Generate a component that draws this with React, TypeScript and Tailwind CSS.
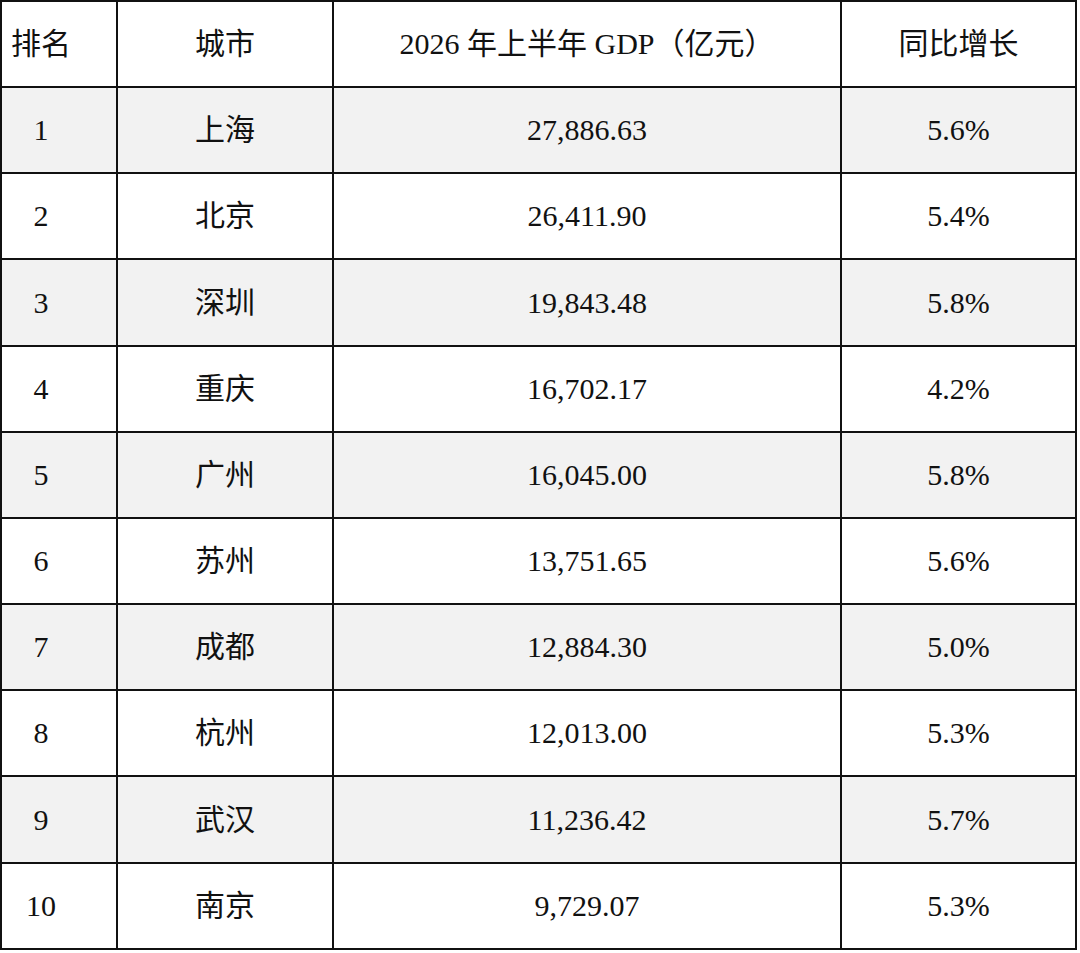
const rows = [
  { rank: "1", city: "上海", gdp: "27,886.63", growth: "5.6%" },
  { rank: "2", city: "北京", gdp: "26,411.90", growth: "5.4%" },
  { rank: "3", city: "深圳", gdp: "19,843.48", growth: "5.8%", tall: true },
  { rank: "4", city: "重庆", gdp: "16,702.17", growth: "4.2%" },
  { rank: "5", city: "广州", gdp: "16,045.00", growth: "5.8%" },
  { rank: "6", city: "苏州", gdp: "13,751.65", growth: "5.6%" },
  { rank: "7", city: "成都", gdp: "12,884.30", growth: "5.0%" },
  { rank: "8", city: "杭州", gdp: "12,013.00", growth: "5.3%" },
  { rank: "9", city: "武汉", gdp: "11,236.42", growth: "5.7%", tall: true },
  { rank: "10", city: "南京", gdp: "9,729.07", growth: "5.3%" },
];

function Row({
  cells,
  shaded,
  tall,
}: {
  cells: [string, string, string, string];
  shaded?: boolean;
  tall?: boolean;
}) {
  return (
    <div
      className={`flex border-b-2 border-[#111] ${tall ? "h-[87px]" : "h-[86px]"} ${
        shaded ? "bg-[#f2f2f2]" : "bg-white"
      }`}
    >
      <div className="flex w-[116px] items-center justify-center border-r-2 border-[#111] pr-[36px]">
        {cells[0]}
      </div>
      <div className="flex w-[216px] items-center justify-center border-r-2 border-[#111]">
        {cells[1]}
      </div>
      <div className="flex w-[508px] items-center justify-center border-r-2 border-[#111]">
        {cells[2]}
      </div>
      <div className="flex w-[235px] items-center justify-center border-r-2 border-[#111]">
        {cells[3]}
      </div>
    </div>
  );
}

export default function App() {
  return (
    <div className="h-[953px] w-[1080px] overflow-hidden bg-white">
      <div
        className="w-[1077px] border-t-2 border-l-2 border-[#111] text-[30px] leading-none text-[#111]"
        style={{ fontFamily: '"Liberation Serif", "Noto Sans CJK SC", serif' }}
      >
        <Row cells={["排名", "城市", "2026 年上半年 GDP（亿元）", "同比增长"]} />
        {rows.map((r, i) => (
          <Row
            key={r.rank}
            cells={[r.rank, r.city, r.gdp, r.growth]}
            shaded={i % 2 === 0}
            tall={r.tall}
          />
        ))}
      </div>
    </div>
  );
}
